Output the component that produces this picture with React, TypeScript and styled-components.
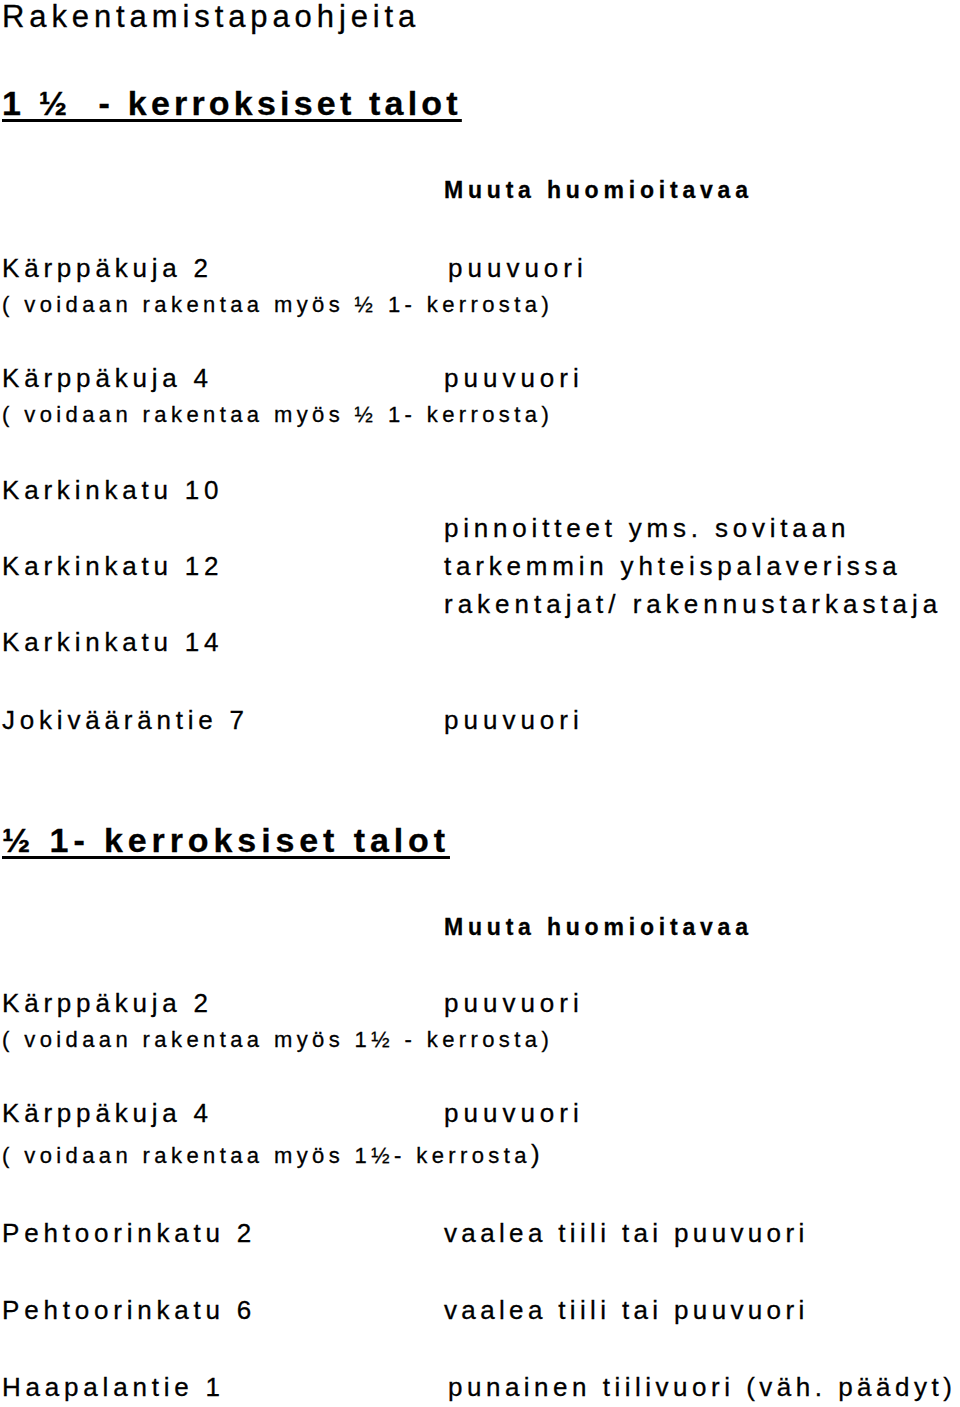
import styled, { createGlobalStyle } from 'styled-components';

const GlobalStyle = createGlobalStyle`
	html, body {
		margin: 0;
		padding: 0;
		background: #ffffff;
	}
	body {
		color: #000000;
		font-family: 'Liberation Sans', Arial, sans-serif;
		-webkit-text-stroke: 0.3px #000000;
	}
`;

const Page = styled.div`
	width: 960px;
	padding-left: 2px;
	box-sizing: border-box;
`;

const DocTitle = styled.div`
	font-size: 31px;
	line-height: 34px;
	letter-spacing: 4.9px;
	white-space: nowrap;
`;

const SectionHeading = styled.div<{ $mt: number; $ls: number }>`
	margin-top: ${({ $mt }) => $mt}px;
	font-size: 34px;
	font-weight: 700;
	line-height: 40px;
	letter-spacing: ${({ $ls }) => $ls}px;
	white-space: pre;

	span {
		text-decoration: underline;
		text-decoration-thickness: 3px;
		text-underline-offset: 4px;
	}
`;

const Row = styled.div<{ $mt?: number }>`
	display: grid;
	grid-template-columns: 442px 1fr;
	margin-top: ${({ $mt = 0 }) => $mt}px;
`;

const Cell = styled.div<{ $indent?: number; $ls?: number }>`
	padding-left: ${({ $indent = 0 }) => $indent}px;
	font-size: 26px;
	line-height: 38px;
	min-height: 38px;
	letter-spacing: ${({ $ls = 4.8 }) => $ls}px;
	white-space: nowrap;
`;

const ColumnHeader = styled.div`
	font-size: 23px;
	font-weight: 700;
	line-height: 30px;
	letter-spacing: 4.8px;
	white-space: nowrap;
`;

const Note = styled.div<{ $mt?: number }>`
	margin-top: ${({ $mt = 0 }) => $mt}px;
	font-size: 22px;
	line-height: 36px;
	letter-spacing: 4.4px;
	white-space: pre;
`;

const BigParen = styled.span`
	font-size: 26px;
	letter-spacing: 0;
`;

const Section = styled.section``;

export default function App() {
	return (
		<>
			<GlobalStyle />
			<Page>
				<DocTitle>Rakentamistapaohjeita</DocTitle>

				<Section>
					<SectionHeading $mt={49} $ls={4.2}>
						<span>{'1 ½  - kerroksiset talot'}</span>
					</SectionHeading>
					<Row $mt={52}>
						<div />
						<ColumnHeader>Muuta huomioitavaa</ColumnHeader>
					</Row>

					<Row $mt={44}>
						<Cell>Kärppäkuja 2</Cell>
						<Cell $indent={4} $ls={5}>puuvuori</Cell>
					</Row>
					<Note>( voidaan rakentaa myös ½ 1- kerrosta)</Note>

					<Row $mt={36}>
						<Cell>Kärppäkuja 4</Cell>
						<Cell $ls={5}>puuvuori</Cell>
					</Row>
					<Note>( voidaan rakentaa myös ½ 1- kerrosta)</Note>

					<Row $mt={38}>
						<div>
							<Cell>Karkinkatu 10</Cell>
							<Cell />
							<Cell>Karkinkatu 12</Cell>
							<Cell />
							<Cell>Karkinkatu 14</Cell>
						</div>
						<div>
							<Cell />
							<Cell>pinnoitteet yms. sovitaan</Cell>
							<Cell>tarkemmin yhteispalaverissa</Cell>
							<Cell $ls={5}>rakentajat/ rakennustarkastaja</Cell>
							<Cell />
						</div>
					</Row>

					<Row $mt={40}>
						<Cell>Jokivääräntie 7</Cell>
						<Cell $ls={5}>puuvuori</Cell>
					</Row>
				</Section>

				<Section>
					<SectionHeading $mt={81} $ls={4.9}>
						<span>{'½ 1- kerroksiset talot'}</span>
					</SectionHeading>
					<Row $mt={52}>
						<div />
						<ColumnHeader>Muuta huomioitavaa</ColumnHeader>
					</Row>

					<Row $mt={42}>
						<Cell>Kärppäkuja 2</Cell>
						<Cell $ls={5}>puuvuori</Cell>
					</Row>
					<Note>( voidaan rakentaa myös 1½ - kerrosta)</Note>

					<Row $mt={36}>
						<Cell>Kärppäkuja 4</Cell>
						<Cell $ls={5}>puuvuori</Cell>
					</Row>
					<Note $mt={4}>
						( voidaan rakentaa myös 1½- kerrosta<BigParen>)</BigParen>
					</Note>

					<Row $mt={40}>
						<Cell>Pehtoorinkatu 2</Cell>
						<Cell $ls={4.35}>vaalea tiili tai puuvuori</Cell>
					</Row>
					<Row $mt={39}>
						<Cell>Pehtoorinkatu 6</Cell>
						<Cell $ls={4.35}>vaalea tiili tai puuvuori</Cell>
					</Row>
					<Row $mt={39}>
						<Cell>Haapalantie 1</Cell>
						<Cell $indent={4} $ls={4.5}>
							punainen tiilivuori (väh. päädyt)
						</Cell>
					</Row>
				</Section>
			</Page>
		</>
	);
}
